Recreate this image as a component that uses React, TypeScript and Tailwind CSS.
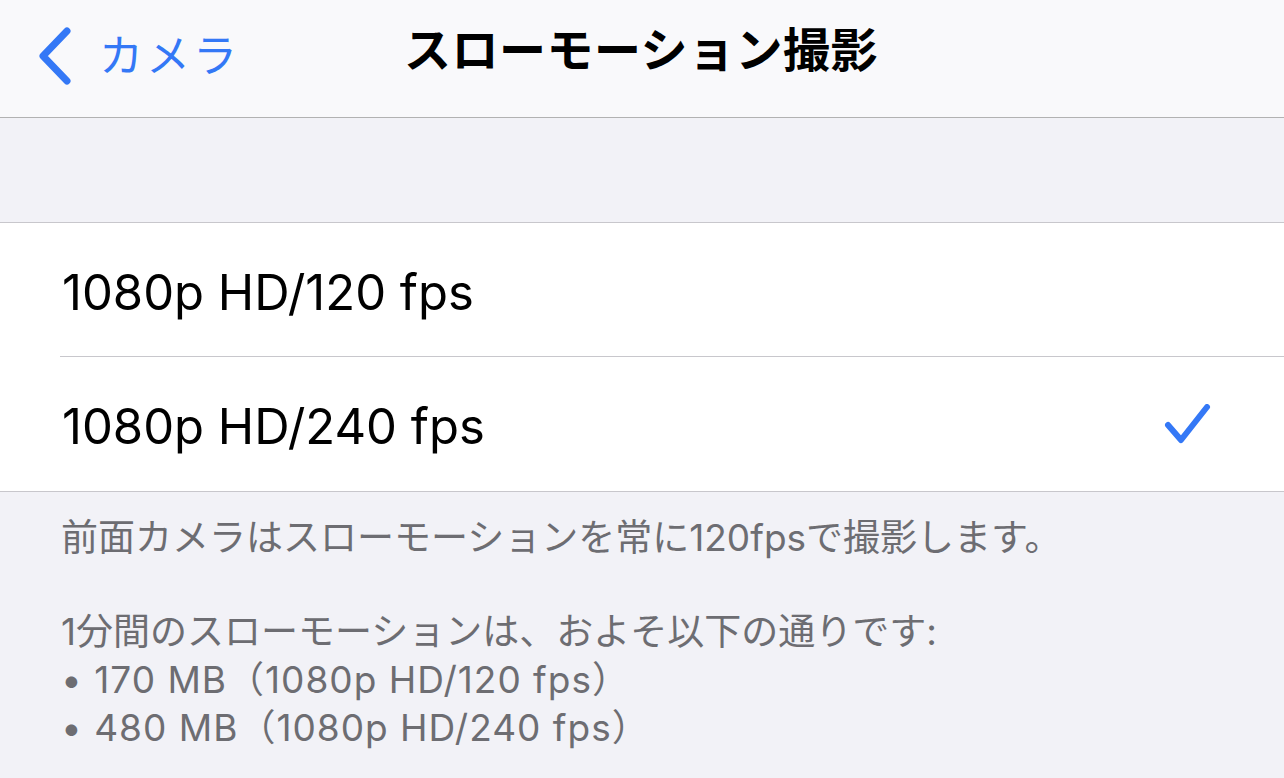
const font = { fontFamily: 'Inter, "Noto Sans CJK JP", sans-serif' };

function Chevron() {
  return (
    <svg width="36" height="58" viewBox="0 0 36 58" fill="none">
      <path d="M30 4 L6 29 L30 54" stroke="#3478f6" strokeWidth="7" strokeLinecap="round" strokeLinejoin="round" />
    </svg>
  );
}

function Check() {
  return (
    <svg width="50" height="48" viewBox="0 0 50 48" fill="none">
      <path d="M4 21 L17 36 L43 3" stroke="#3478f6" strokeWidth="6" strokeLinecap="round" strokeLinejoin="round" />
    </svg>
  );
}

const options = [
  { label: '1080p HD/120 fps', selected: false },
  { label: '1080p HD/240 fps', selected: true },
];

export default function App() {
  return (
    <div className="w-[1284px] h-[778px] bg-[#f2f2f7] overflow-hidden" style={font}>
      <header className="h-[118px] bg-[#f9f9fb] border-b border-[#b2b2b2] flex items-center relative">
        <div className="flex items-center pl-[37px] gap-[26px] pb-[5px]">
          <Chevron />
          <span className="text-[44px] text-[#3478f6] tracking-[3px]">カメラ</span>
        </div>
        <h1 className="absolute left-[404px] top-[15px] text-[47px] font-bold text-black tracking-[0.5px]">
          スローモーション撮影
        </h1>
      </header>

      <div className="h-[104px]" />

      <div className="bg-white border-y border-[#c8c7cc]">
        {options.map((o, i) => (
          <div key={o.label} className="pl-[60px]">
            <div
              className={
                'h-[134px] flex items-center justify-between pr-[70px] ' +
                (i < options.length - 1 ? 'border-b border-[#c8c7cc]' : '')
              }
            >
              <span className="text-[49px] text-black pl-[2px] pt-[6px]">{o.label}</span>
              {o.selected && (
                <span className="pt-[8px]">
                  <Check />
                </span>
              )}
            </div>
          </div>
        ))}
      </div>

      <div className="pl-[61px] pt-[22px] text-[37px] leading-[48px] text-[#6d6d72]">
        <p>前面カメラはスローモーションを常に120fpsで撮影します。</p>
        <p className="h-[46px]" />
        <p>1分間のスローモーションは、およそ以下の通りです:</p>
        <p className="tracking-[1px]">• 170 MB（1080p HD/120 fps）</p>
        <p className="tracking-[1px]">• 480 MB（1080p HD/240 fps）</p>
      </div>
    </div>
  );
}
